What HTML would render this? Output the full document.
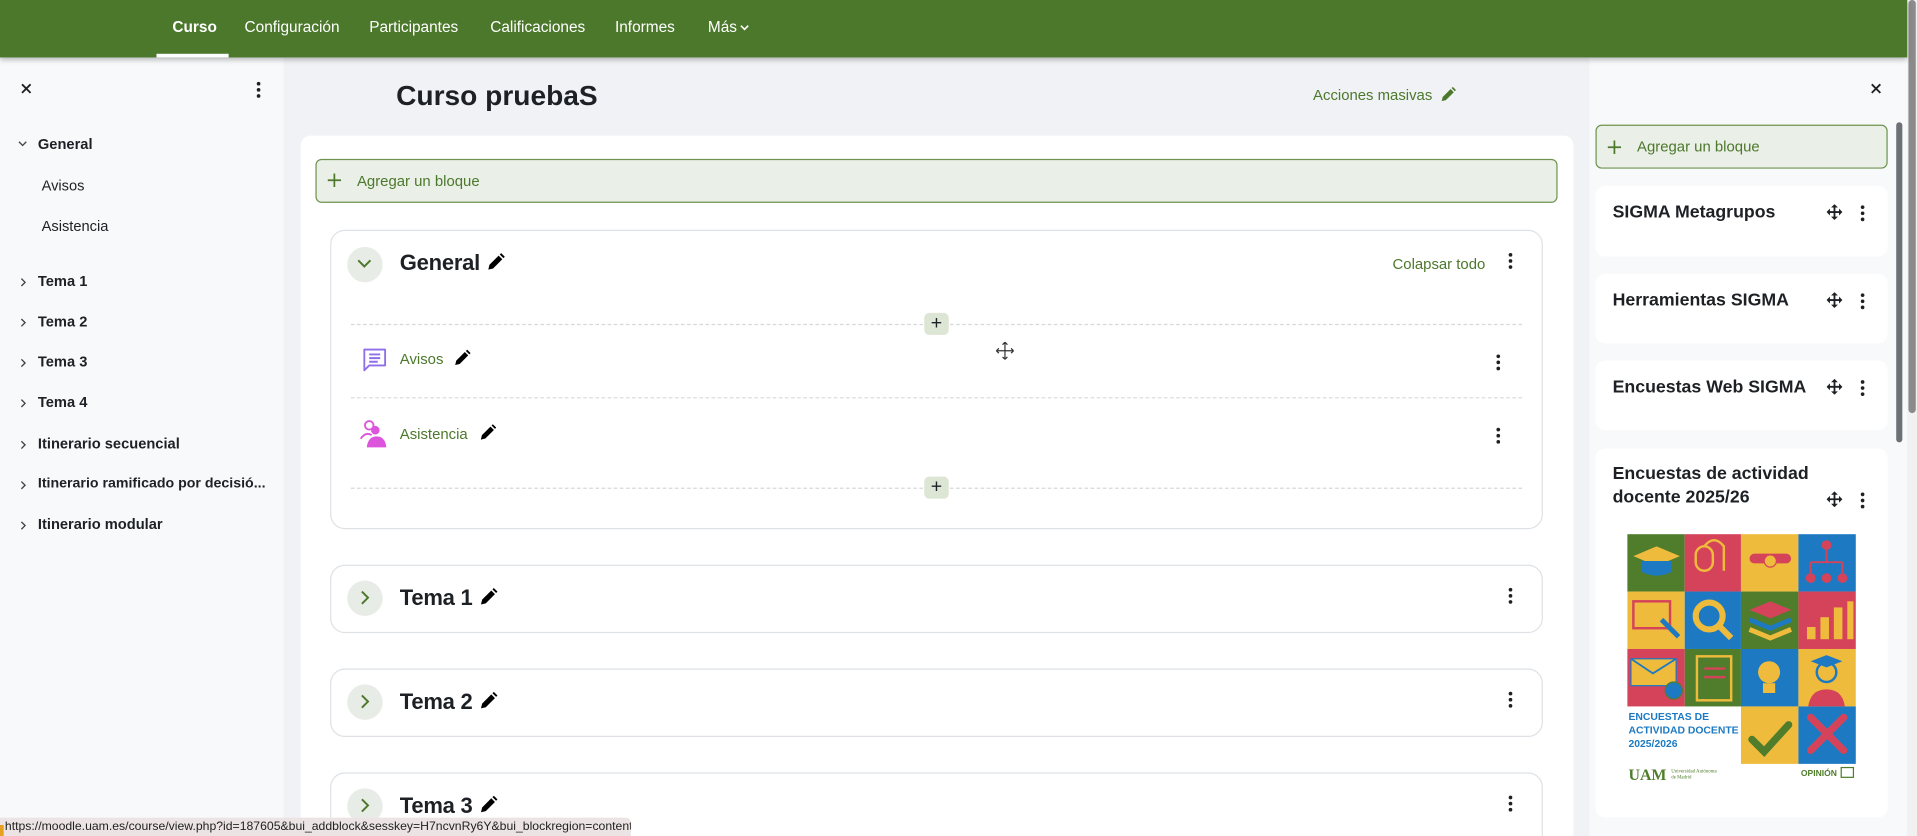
<!DOCTYPE html>
<html><head><meta charset="utf-8"><style>
*{box-sizing:border-box;margin:0;padding:0}
html,body{width:1917px;height:836px;overflow:hidden;background:#f1f2f5}
#w{position:absolute;left:0;top:0;width:1568px;height:684px;transform:scale(1.22258,1.2222);transform-origin:0 0;font-family:"Liberation Sans",Arial,sans-serif;color:#1d2125;overflow:hidden;background:#f1f2f5}
.a{position:absolute}
.nav{left:0;top:0;width:1560px;height:47px;background:#4c782c;box-shadow:0 2px 4px rgba(0,0,0,.25);z-index:5}
.nav span{position:absolute;top:15px;color:#fff;font-size:12.6px}
.dr{background:#f8f9fa}
.lt{position:absolute;font-size:12px;color:#1d2125;white-space:nowrap}
.chev{position:absolute}
.g{color:#4c782c}
.card{position:absolute;background:#fff;border:1px solid #dee2e6;border-radius:12px}
.circ{position:absolute;width:29px;height:29px;border-radius:50%;background:#e8ece6}
.h{position:absolute;font-size:18px;font-weight:bold;white-space:nowrap;letter-spacing:-0.2px}
.h svg{margin-left:5px;vertical-align:-1px}
.dots{position:absolute;width:3px}
.dots i{display:block;width:3px;height:3px;border-radius:50%;background:#1d2125;margin-bottom:2px}
.dash{position:absolute;height:0;border-top:1px dashed #d6d9dc}
.plus{position:absolute;width:20px;height:18px;border-radius:4px;background:#dde5d5;text-align:center;font-size:16px;line-height:18px;color:#1d2125}
.rb{position:absolute;left:1305px;width:239px;background:#fff;border-radius:8px}
.rb b{position:absolute;left:14px;font-size:14.5px;line-height:19px}
.pen{position:absolute}
</style></head><body><div id="w">
<svg width="0" height="0" style="position:absolute"><defs><symbol id="pen" viewBox="0 0 16 16"><path d="M1.5 14.5l1-4.2 8-8 3.2 3.2-8 8z M11.5 1.3l1.2-1.2 3.2 3.2-1.2 1.2z"/></symbol>
<symbol id="cr" viewBox="0 0 10 10"><path d="M3.5 2l3 3-3 3" fill="none" stroke="#444" stroke-width="1.1"/></symbol>
<symbol id="mv" viewBox="0 0 14 14"><path d="M7 1v12M1 7h12" stroke="#1d2125" stroke-width="1.6"/><path d="M7 0l-3 3h6zM7 14l-3-3h6zM0 7l3-3v6zM14 7l-3-3v6z" fill="#1d2125"/></symbol></defs></svg>
<div class="a nav">
<span style="left:141px;font-weight:bold">Curso</span>
<div class="a" style="left:128px;top:44px;width:59px;height:3px;background:#fff"></div>
<span style="left:200px">Configuración</span>
<span style="left:302px">Participantes</span>
<span style="left:401px">Calificaciones</span>
<span style="left:503px">Informes</span>
<span style="left:579px">Más</span>
<svg class="a" style="left:605px;top:20px" width="8" height="6"><path d="M1 1l3 3 3-3" fill="none" stroke="#fff" stroke-width="1.3"/></svg>
</div>
<!-- left drawer -->
<div class="a dr" style="left:0;top:47px;width:232px;height:637px"></div>
<svg class="a" style="left:17px;top:68px" width="9" height="9"><path d="M1 1l7 7M8 1l-7 7" stroke="#1d2125" stroke-width="1.5"/></svg>
<div class="dots" style="left:210px;top:67px"><i></i><i></i><i></i></div>
<svg class="a" style="left:14px;top:114px" width="9" height="8"><path d="M1.5 2l3 3 3-3" fill="none" stroke="#444" stroke-width="1.1"/></svg>
<div class="lt" style="left:31px;top:111px;font-weight:bold">General</div>
<div class="lt" style="left:34px;top:145px">Avisos</div>
<div class="lt" style="left:34px;top:178px">Asistencia</div>
<svg class="chev" style="left:14px;top:226px" width="10" height="10"><use href="#cr"/></svg><div class="lt" style="left:31px;top:223px;font-weight:bold">Tema 1</div>
<svg class="chev" style="left:14px;top:259px" width="10" height="10"><use href="#cr"/></svg><div class="lt" style="left:31px;top:256px;font-weight:bold">Tema 2</div>
<svg class="chev" style="left:14px;top:292px" width="10" height="10"><use href="#cr"/></svg><div class="lt" style="left:31px;top:289px;font-weight:bold">Tema 3</div>
<svg class="chev" style="left:14px;top:325px" width="10" height="10"><use href="#cr"/></svg><div class="lt" style="left:31px;top:322px;font-weight:bold">Tema 4</div>
<svg class="chev" style="left:14px;top:359px" width="10" height="10"><use href="#cr"/></svg><div class="lt" style="left:31px;top:356px;font-weight:bold">Itinerario secuencial</div>
<svg class="chev" style="left:14px;top:392px" width="10" height="10"><use href="#cr"/></svg><div class="lt" style="left:31px;top:389px;font-weight:bold;font-size:11.6px">Itinerario ramificado por decisió...</div>
<svg class="chev" style="left:14px;top:425px" width="10" height="10"><use href="#cr"/></svg><div class="lt" style="left:31px;top:422px;font-weight:bold">Itinerario modular</div>
<!-- main -->
<div class="a" style="left:324px;top:65px;font-size:23px;font-weight:bold">Curso pruebaS</div>
<div class="a g" style="left:1074px;top:71px;font-size:12.2px">Acciones masivas</div>
<svg class="pen" style="left:1178px;top:71px;fill:#4c782c" width="13" height="13"><use href="#pen"/></svg>
<div class="a" style="left:246px;top:111px;width:1041px;height:600px;background:#fff;border-radius:8px"></div>
<div class="a" style="left:258px;top:130px;width:1016px;height:36px;background:#eaefe7;border:1px solid #6e9450;border-radius:5px"></div>
<svg class="a" style="left:268px;top:142px" width="11" height="11"><path d="M5.5 0v11M0 5.5h11" stroke="#4c782c" stroke-width="1.4"/></svg>
<div class="a g" style="left:292px;top:141px;font-size:12.2px">Agregar un bloque</div>
<div class="card" style="left:270px;top:188px;width:992px;height:245px"></div>
<div class="circ" style="left:284px;top:202px"></div>
<svg class="a" style="left:291px;top:210px" width="14" height="12"><path d="M2 3l5 5 5-5" fill="none" stroke="#4c782c" stroke-width="1.6"/></svg>
<div class="h" style="left:327px;top:205px">General<svg width="15" height="15"><use href="#pen"/></svg></div>
<div class="a g" style="left:1139px;top:209px;font-size:12.2px">Colapsar todo</div>
<div class="dots" style="left:1234px;top:207px"><i></i><i></i><i></i></div>
<div class="dash" style="left:287px;top:265px;width:958px"></div>
<div class="plus" style="left:756px;top:256px">+</div>
<svg class="a" style="left:296px;top:284px" width="22" height="22"><path d="M2 2h17v13H6l-4 4z" fill="none" stroke="#8f6fe8" stroke-width="1.5" stroke-linejoin="round"/><path d="M6 6h9M6 9h9M6 12h7" stroke="#8f6fe8" stroke-width="1.6"/></svg>
<div class="a g" style="left:327px;top:287px;font-size:12.2px">Avisos</div>
<svg class="pen" style="left:371px;top:286px" width="14" height="14"><use href="#pen"/></svg>
<div class="dots" style="left:1224px;top:290px"><i></i><i></i><i></i></div>
<svg class="a" style="left:814px;top:279px" width="16" height="16"><path d="M8 1v14M1 8h14M8 1l-2 2M8 1l2 2M8 15l-2-2M8 15l2-2M1 8l2-2M1 8l2 2M15 8l-2-2M15 8l-2 2" stroke="#333" fill="none"/></svg>
<div class="dash" style="left:287px;top:325px;width:958px"></div>
<svg class="a" style="left:294px;top:343px" width="26" height="24"><circle cx="8" cy="5" r="3.5" fill="none" stroke="#dd55dd" stroke-width="1.5"/><circle cx="13" cy="9" r="3.5" fill="#dd55dd"/><path d="M1 16q4-6 9-3" fill="none" stroke="#dd55dd" stroke-width="1.5"/><path d="M6 23q1-9 8-9 7 0 8 9z" fill="#dd55dd"/></svg>
<div class="a g" style="left:327px;top:348px;font-size:12.2px">Asistencia</div>
<svg class="pen" style="left:392px;top:347px" width="14" height="14"><use href="#pen"/></svg>
<div class="dots" style="left:1224px;top:350px"><i></i><i></i><i></i></div>
<div class="dash" style="left:287px;top:399px;width:958px"></div>
<div class="plus" style="left:756px;top:390px">+</div>
<!-- tema cards -->
<div class="card" style="left:270px;top:462px;width:992px;height:56px"></div>
<div class="circ" style="left:284px;top:475px"></div>
<svg class="a" style="left:293px;top:482px" width="12" height="14"><path d="M3 2l5 5-5 5" fill="none" stroke="#4c782c" stroke-width="1.6"/></svg>
<div class="h" style="left:327px;top:479px">Tema 1<svg width="15" height="15"><use href="#pen"/></svg></div>
<div class="dots" style="left:1234px;top:481px"><i></i><i></i><i></i></div>
<div class="card" style="left:270px;top:547px;width:992px;height:56px"></div>
<div class="circ" style="left:284px;top:560px"></div>
<svg class="a" style="left:293px;top:567px" width="12" height="14"><path d="M3 2l5 5-5 5" fill="none" stroke="#4c782c" stroke-width="1.6"/></svg>
<div class="h" style="left:327px;top:564px">Tema 2<svg width="15" height="15"><use href="#pen"/></svg></div>
<div class="dots" style="left:1234px;top:566px"><i></i><i></i><i></i></div>
<div class="card" style="left:270px;top:632px;width:992px;height:70px"></div>
<div class="circ" style="left:284px;top:645px"></div>
<svg class="a" style="left:293px;top:652px" width="12" height="14"><path d="M3 2l5 5-5 5" fill="none" stroke="#4c782c" stroke-width="1.6"/></svg>
<div class="h" style="left:327px;top:649px">Tema 3<svg width="15" height="15"><use href="#pen"/></svg></div>
<div class="dots" style="left:1234px;top:651px"><i></i><i></i><i></i></div>
<!-- right drawer -->
<div class="a dr" style="left:1300px;top:47px;width:260px;height:637px"></div>
<svg class="a" style="left:1530px;top:68px" width="9" height="9"><path d="M1 1l7 7M8 1l-7 7" stroke="#1d2125" stroke-width="1.5"/></svg>
<div class="a" style="left:1551px;top:100px;width:5px;height:262px;background:#6c7178;border-radius:3px"></div>
<div class="a" style="left:1560px;top:0;width:8px;height:684px;background:#f1f1f1"></div>
<div class="a" style="left:1561px;top:0;width:6px;height:338px;background:#8b8b8b;border-radius:3px"></div>
<div class="a" style="left:1305px;top:102px;width:239px;height:36px;background:#eaefe7;border:1px solid #6e9450;border-radius:5px"></div>
<svg class="a" style="left:1315px;top:115px" width="11" height="11"><path d="M5.5 0v11M0 5.5h11" stroke="#4c782c" stroke-width="1.4"/></svg>
<div class="a g" style="left:1339px;top:113px;font-size:12.2px">Agregar un bloque</div>
<div class="rb" style="top:152px;height:58px"><b style="top:13px">SIGMA Metagrupos</b></div>
<div class="rb" style="top:224px;height:57px"><b style="top:13px">Herramientas SIGMA</b></div>
<div class="rb" style="top:295px;height:57px"><b style="top:13px">Encuestas Web SIGMA</b></div>
<div class="rb" style="top:367px;height:302px"><b style="top:12px">Encuestas de actividad<br>docente 2025/26</b></div>
<svg class="a" style="left:1494px;top:167px" width="13" height="13"><use href="#mv"/></svg><div class="dots" style="left:1522px;top:168px"><i></i><i></i><i></i></div>
<svg class="a" style="left:1494px;top:239px" width="13" height="13"><use href="#mv"/></svg><div class="dots" style="left:1522px;top:240px"><i></i><i></i><i></i></div>
<svg class="a" style="left:1494px;top:310px" width="13" height="13"><use href="#mv"/></svg><div class="dots" style="left:1522px;top:311px"><i></i><i></i><i></i></div>
<svg class="a" style="left:1494px;top:402px" width="13" height="13"><use href="#mv"/></svg><div class="dots" style="left:1522px;top:403px"><i></i><i></i><i></i></div>
<svg class="a" style="left:1331px;top:437px" width="187" height="210" viewBox="0 0 187 210">
<g>
<rect x="0" y="0" width="47" height="47" fill="#4f7d2c"/><rect x="47" y="0" width="46" height="47" fill="#d5435a"/><rect x="93" y="0" width="47" height="47" fill="#efbb3c"/><rect x="140" y="0" width="47" height="47" fill="#1d7ac2"/>
<rect x="0" y="47" width="47" height="47" fill="#efbb3c"/><rect x="47" y="47" width="46" height="47" fill="#1d7ac2"/><rect x="93" y="47" width="47" height="47" fill="#4f7d2c"/><rect x="140" y="47" width="47" height="47" fill="#d5435a"/>
<rect x="0" y="94" width="47" height="47" fill="#d5435a"/><rect x="47" y="94" width="46" height="47" fill="#4f7d2c"/><rect x="93" y="94" width="47" height="47" fill="#1d7ac2"/><rect x="140" y="94" width="47" height="47" fill="#efbb3c"/>
<rect x="93" y="141" width="47" height="47" fill="#efbb3c"/><rect x="140" y="141" width="47" height="47" fill="#1d7ac2"/>
</g>
<path d="M5 18l19-8 19 8-19 8z" fill="#efbb3c"/><path d="M12 22v9q12 6 24 0v-9" fill="#1d7ac2"/>
<rect x="56" y="10" width="14" height="20" rx="7" fill="none" stroke="#efbb3c" stroke-width="2"/><path d="M63 10q8-10 16 0v20" fill="none" stroke="#efbb3c" stroke-width="2"/>
<rect x="100" y="16" width="34" height="8" rx="4" fill="#d5435a"/><circle cx="117" cy="22" r="5" fill="#efbb3c" stroke="#d5435a"/>
<circle cx="163" cy="9" r="4" fill="#d5435a"/><circle cx="150" cy="36" r="4" fill="#d5435a"/><circle cx="163" cy="36" r="4" fill="#d5435a"/><circle cx="176" cy="36" r="4" fill="#d5435a"/><path d="M163 13v10M150 23h26M150 23v9M176 23v9" stroke="#d5435a" stroke-width="1.5"/>
<rect x="5" y="55" width="30" height="22" fill="none" stroke="#d5435a" stroke-width="2"/><path d="M28 70l14 14" stroke="#1d7ac2" stroke-width="4"/>
<circle cx="67" cy="67" r="11" fill="none" stroke="#efbb3c" stroke-width="5"/><path d="M75 75l10 10" stroke="#efbb3c" stroke-width="5"/>
<path d="M100 62l17-7 17 7-17 7z" fill="#d5435a"/><path d="M100 70l17 7 17-7" fill="none" stroke="#1d7ac2" stroke-width="4"/><path d="M100 78l17 7 17-7" fill="none" stroke="#efbb3c" stroke-width="4"/>
<rect x="147" y="76" width="7" height="10" fill="#efbb3c"/><rect x="158" y="68" width="7" height="18" fill="#efbb3c"/><rect x="169" y="60" width="7" height="26" fill="#efbb3c"/><rect x="180" y="55" width="5" height="31" fill="#efbb3c"/>
<rect x="3" y="102" width="37" height="22" fill="#efbb3c" stroke="#1d7ac2"/><path d="M3 102l18 12 19-12" fill="none" stroke="#1d7ac2" stroke-width="1.5"/><circle cx="38" cy="128" r="7" fill="#1d7ac2" stroke="#4f7d2c"/>
<rect x="57" y="100" width="28" height="36" fill="none" stroke="#efbb3c" stroke-width="2"/><path d="M63 110h17M63 117h17" stroke="#d5435a" stroke-width="2"/>
<circle cx="116" cy="113" r="9" fill="#efbb3c"/><rect x="111" y="122" width="10" height="8" fill="#efbb3c"/>
<circle cx="163" cy="113" r="8" fill="#efbb3c" stroke="#1d7ac2" stroke-width="2"/><path d="M148 141q2-14 15-14 13 0 15 14z" fill="#d5435a"/><path d="M150 104l13-5 13 5-13 5z" fill="#1d7ac2"/>
<path d="M102 168l10 10 20-22" fill="none" stroke="#4f7d2c" stroke-width="6" stroke-linecap="round"/>
<path d="M150 150l27 27M177 150l-27 27" stroke="#d5435a" stroke-width="6" stroke-linecap="round"/>
<text x="1" y="152" font-family="Liberation Sans" font-weight="bold" font-size="8.5" fill="#1d7ac2">ENCUESTAS DE</text>
<text x="1" y="163" font-family="Liberation Sans" font-weight="bold" font-size="8.5" fill="#1d7ac2">ACTIVIDAD DOCENTE</text>
<text x="1" y="174" font-family="Liberation Sans" font-weight="bold" font-size="8.5" fill="#1d7ac2">2025/2026</text>
<text x="1" y="201" font-family="Liberation Serif" font-weight="bold" font-size="13" fill="#4f7d2c">UAM</text>
<text x="36" y="195" font-family="Liberation Serif" font-size="4" fill="#4f7d2c">Universidad Autónoma</text>
<text x="36" y="200" font-family="Liberation Serif" font-size="4" fill="#4f7d2c">de Madrid</text>
<text x="142" y="198" font-family="Liberation Sans" font-weight="bold" font-size="7" fill="#4f7d2c">OPINIÓN</text>
<rect x="175" y="191" width="10" height="8" fill="none" stroke="#4f7d2c"/>
</svg>
<!-- status bar -->
<div class="a" style="left:0;top:669px;width:516px;height:15px;background:#ece4e4;border-top-right-radius:4px;font-size:10px;line-height:15px;padding-left:4px;color:#222;z-index:9;white-space:nowrap;overflow:hidden">https://moodle.uam.es/course/view.php?id=187605&amp;bui_addblock&amp;sesskey=H7ncvnRy6Y&amp;bui_blockregion=content</div>
<div class="a" style="left:0;top:675px;width:3px;height:9px;background:#e8a020;z-index:10"></div>
</div></body></html>
